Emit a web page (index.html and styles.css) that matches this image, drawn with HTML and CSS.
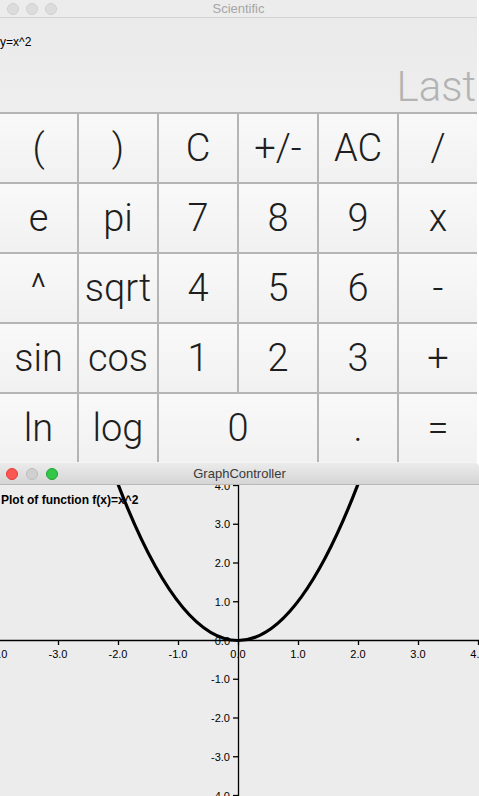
FILE: index.html
```html
<!DOCTYPE html>
<html>
<head>
<meta charset="utf-8">
<link rel="stylesheet" href="styles.css">
</head>
<body>
<div class="win calc">
  <div class="titlebar inactive">
    <div class="lights"><span class="light"></span><span class="light"></span><span class="light"></span></div>
    <div class="title">Scientific</div>
    <div></div>
  </div>
  <div class="display">
    <div class="expr">y=x^2</div>
    <div class="last">Last</div>
  </div>
  <div class="keys">
    <div class="key">(</div><div class="key">)</div><div class="key">C</div><div class="key">+/-</div><div class="key">AC</div><div class="key">/</div>
    <div class="key">e</div><div class="key">pi</div><div class="key">7</div><div class="key">8</div><div class="key">9</div><div class="key">x</div>
    <div class="key">^</div><div class="key">sqrt</div><div class="key">4</div><div class="key">5</div><div class="key">6</div><div class="key">-</div>
    <div class="key">sin</div><div class="key">cos</div><div class="key">1</div><div class="key">2</div><div class="key">3</div><div class="key">+</div>
    <div class="key">ln</div><div class="key">log</div><div class="key wide">0</div><div class="key">.</div><div class="key">=</div>
  </div>
</div>
<div class="win graph">
  <div class="titlebar active">
    <div class="lights"><span class="light red"></span><span class="light grey"></span><span class="light green"></span></div>
    <div class="title">GraphController</div>
    <div></div>
  </div>
  <div class="plot">
    <svg class="chart" width="479" height="311" viewBox="0 0 479 311">
      <text class="heading" x="1" y="19">Plot of function f(x)=x^2</text>
      <g class="axis">
        <line x1="0" y1="155.5" x2="479" y2="155.5"/>
        <line x1="238.5" y1="0" x2="238.5" y2="311"/>
        <line x1="-1.5" y1="155.5" x2="-1.5" y2="160"/>
        <line x1="58.5" y1="155.5" x2="58.5" y2="160"/>
        <line x1="118.5" y1="155.5" x2="118.5" y2="160"/>
        <line x1="178.5" y1="155.5" x2="178.5" y2="160"/>
        <line x1="238.5" y1="155.5" x2="238.5" y2="160"/>
        <line x1="298.5" y1="155.5" x2="298.5" y2="160"/>
        <line x1="358.5" y1="155.5" x2="358.5" y2="160"/>
        <line x1="418.5" y1="155.5" x2="418.5" y2="160"/>
        <line x1="478.5" y1="155.5" x2="478.5" y2="160"/>
        <line x1="233" y1="0.5" x2="238.5" y2="0.5"/>
        <line x1="233" y1="39.25" x2="238.5" y2="39.25"/>
        <line x1="233" y1="78" x2="238.5" y2="78"/>
        <line x1="233" y1="116.75" x2="238.5" y2="116.75"/>
        <line x1="233" y1="194.25" x2="238.5" y2="194.25"/>
        <line x1="233" y1="233" x2="238.5" y2="233"/>
        <line x1="233" y1="271.75" x2="238.5" y2="271.75"/>
        <line x1="233" y1="310.5" x2="238.5" y2="310.5"/>
      </g>
      <g class="xlabels">
        <text x="-2" y="173">-4.0</text>
        <text x="58" y="173">-3.0</text>
        <text x="118" y="173">-2.0</text>
        <text x="178" y="173">-1.0</text>
        <text x="238" y="173">0.0</text>
        <text x="298" y="173">1.0</text>
        <text x="358" y="173">2.0</text>
        <text x="418" y="173">3.0</text>
        <text x="478" y="173">4.0</text>
      </g>
      <g class="ylabels">
        <text x="230" y="4.5">4.0</text>
        <text x="230" y="43.25">3.0</text>
        <text x="230" y="82">2.0</text>
        <text x="230" y="120.75">1.0</text>
        <text x="230" y="159.5">0.0</text>
        <text x="230" y="198.25">-1.0</text>
        <text x="230" y="237">-2.0</text>
        <text x="230" y="275.75">-3.0</text>
        <text x="230" y="314.5">-4.0</text>
      </g>
      <path class="curve" d="M115.6,-7.2 Q238,318.2 360.4,-7.2"/>
    </svg>
  </div>
</div>
</body>
</html>
```
FILE: styles.css
```css
html, body {
  margin: 0;
  padding: 0;
  background: #ffffff;
}
body {
  width: 479px;
  height: 796px;
  overflow: hidden;
  font-family: "Liberation Sans", Arial, sans-serif;
}
.win {
  width: 477px;
}
.titlebar {
  display: grid;
  grid-template-columns: 1fr auto 1fr;
  align-items: center;
  box-sizing: border-box;
}
.titlebar.inactive {
  height: 18px;
  background: #ececec;
  border-bottom: 1px solid #d3d3d3;
}
.titlebar.active {
  height: 23px;
  background: linear-gradient(#ebebeb, #d5d5d5);
  border-top: 1px solid #f4f4f4;
  border-bottom: 1px solid #b9b9b9;
  border-top-right-radius: 5px;
}
.lights {
  display: flex;
  gap: 7px;
  padding-left: 7px;
}
.light {
  width: 12px;
  height: 12px;
  border-radius: 50%;
  box-sizing: border-box;
  background: #dcdcdc;
  border: 1px solid #d0d0d0;
}
.active .lights {
  padding-left: 6px;
  gap: 8px;
}
.light.red { background: #fc5753; border-color: #df3d3a; }
.light.grey { background: #d0d0d0; border-color: #bdbdbd; }
.light.green { background: #33c748; border-color: #1fa22f; }
.title {
  font-size: 13px;
  color: #a6a6a6;
}
.active .title {
  color: #3a3a3a;
}
.display {
  height: 94px;
  box-sizing: border-box;
  background: linear-gradient(#eaeaea, #eeeeee);
  display: flex;
  flex-direction: column;
  justify-content: space-between;
  padding: 17px 1px 4px 0;
}
.expr {
  font-size: 12px;
  line-height: 14px;
  color: #000;
}
.last {
  text-align: right;
  font-family: Roboto, "Liberation Sans", sans-serif;
  font-weight: 300;
  font-size: 42px;
  line-height: 42px;
  color: #b3b3b3;
}
.keys {
  display: grid;
  grid-template-columns: 77px 78px 78px 78px 78px 78px;
  grid-auto-rows: 68px;
  gap: 2px;
  padding-top: 2px;
  background: #b5b5b5;
}
.key {
  display: flex;
  align-items: center;
  justify-content: center;
  background: linear-gradient(#f9f9f9, #f1f1f1);
  font-family: Roboto, "Liberation Sans", sans-serif;
  font-weight: 300;
  font-size: 38px;
  color: #1e1e1e;
}
.key.wide {
  grid-column: span 2;
}
.graph {
  width: 479px;
}
.plot {
  height: 311px;
  background: #ececec;
  overflow: hidden;
}
.chart {
  display: block;
}
.chart text {
  font-family: "Liberation Sans", Arial, sans-serif;
  font-size: 11px;
  fill: #000;
}
.chart .heading {
  font-size: 12px;
  font-weight: bold;
}
.xlabels text {
  text-anchor: middle;
}
.ylabels text {
  text-anchor: end;
}
.axis line {
  stroke: #000;
  stroke-width: 1.3;
}
.curve {
  fill: none;
  stroke: #000;
  stroke-width: 3.2;
}
```
